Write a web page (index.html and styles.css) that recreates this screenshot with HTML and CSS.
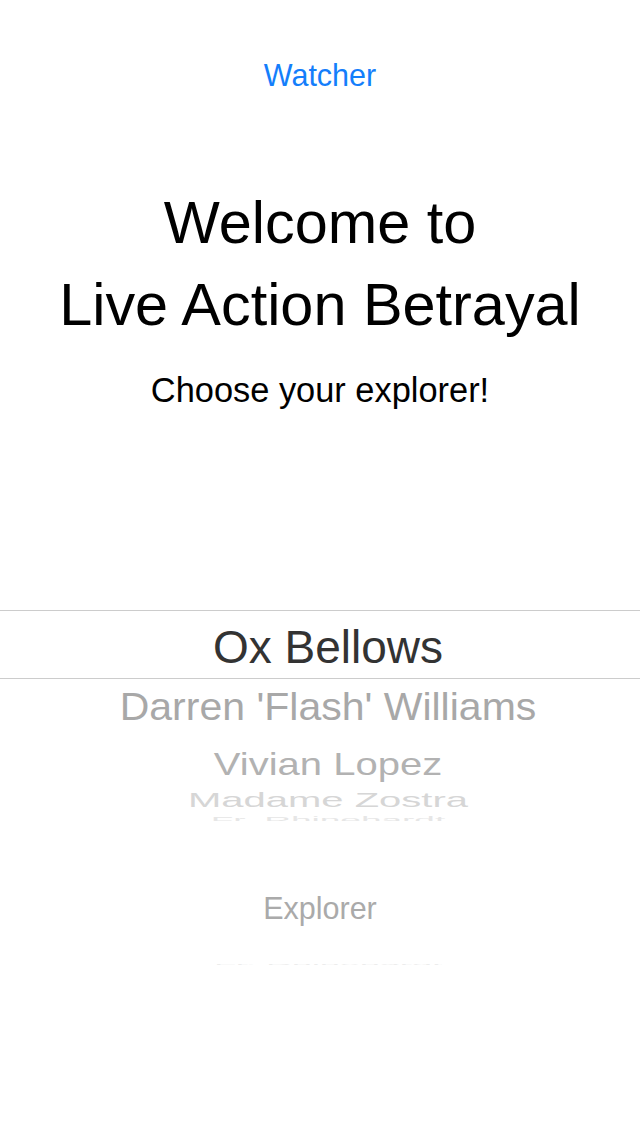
FILE: index.html
```html
<!DOCTYPE html>
<html>
<head>
<meta charset="utf-8">
<link rel="stylesheet" href="styles.css">
</head>
<body>
<div class="screen">
  <div class="top-link">Watcher</div>
  <h1 class="title"><span>Welcome to</span><span>Live Action Betrayal</span></h1>
  <p class="subtitle">Choose your explorer!</p>
  <div class="picker">
    <div class="row row-selected">Ox Bellows</div>
    <div class="row row-1"><span>Darren 'Flash' Williams</span></div>
    <div class="row row-2"><span>Vivian Lopez</span></div>
    <div class="row row-3"><span>Madame Zostra</span></div>
    <div class="row row-4"><span>Fr. Rhinehardt</span></div>
  </div>
  <div class="picker-label">Explorer</div>
  <div class="ghost"><span>Fr. Rhinehardt</span></div>
</div>
</body>
</html>
```

FILE: styles.css
```css
html, body {
  margin: 0;
  padding: 0;
  background: #ffffff;
}

.screen {
  width: 640px;
  height: 1136px;
  display: flex;
  flex-direction: column;
  align-items: stretch;
  font-family: "Liberation Sans", Arial, sans-serif;
  text-align: center;
  overflow: hidden;
}

.top-link {
  margin-top: 57px;
  font-size: 30.5px;
  line-height: 36px;
  color: #147efb;
}

.title {
  margin: 89px 0 0 0;
  font-weight: normal;
  font-size: 59.4px;
  line-height: 82px;
  color: #000;
  display: flex;
  flex-direction: column;
}

.subtitle {
  margin: 24px 0 0 0;
  font-size: 34.4px;
  line-height: 40px;
  color: #000;
}

.picker {
  margin-top: 200px;
  height: 211px;
  overflow: hidden;
  display: flex;
  flex-direction: column;
}

.row {
  flex: none;
  white-space: nowrap;
  padding-left: 16px;
}

.row span {
  display: inline-block;
}

.row-selected {
  border-top: 1px solid #cccccc;
  border-bottom: 1px solid #cccccc;
  padding-top: 5px;
  height: 62px;
  line-height: 62px;
  font-size: 46px;
  color: #333333;
}

.row-1 {
  height: 57px;
  line-height: 57px;
  font-size: 41px;
  color: #a8a8a8;
}
.row-1 span { transform: scaleY(0.935); }

.row-2 {
  height: 57px;
  line-height: 57px;
  font-size: 40px;
  color: #b2b2b2;
}
.row-2 span { transform: scaleY(0.77); }

.row-3 {
  height: 14px;
  line-height: 14px;
  font-size: 40px;
  color: #d6d6d6;
}
.row-3 span { transform: scaleY(0.49); }

.row-4 {
  height: 26px;
  line-height: 26px;
  font-size: 37px;
  color: #e6e6e6;
}
.row-4 span { transform: scaleY(0.25); }

.picker-label {
  margin-top: 69px;
  font-size: 30.5px;
  line-height: 36px;
  color: #aaaaaa;
}

.ghost {
  margin-top: 34px;
  height: 10px;
  line-height: 10px;
  font-size: 36px;
  color: #ececec;
  padding-left: 16px;
  white-space: nowrap;
}
.ghost span {
  display: inline-block;
  transform: scaleY(0.04);
}
```
